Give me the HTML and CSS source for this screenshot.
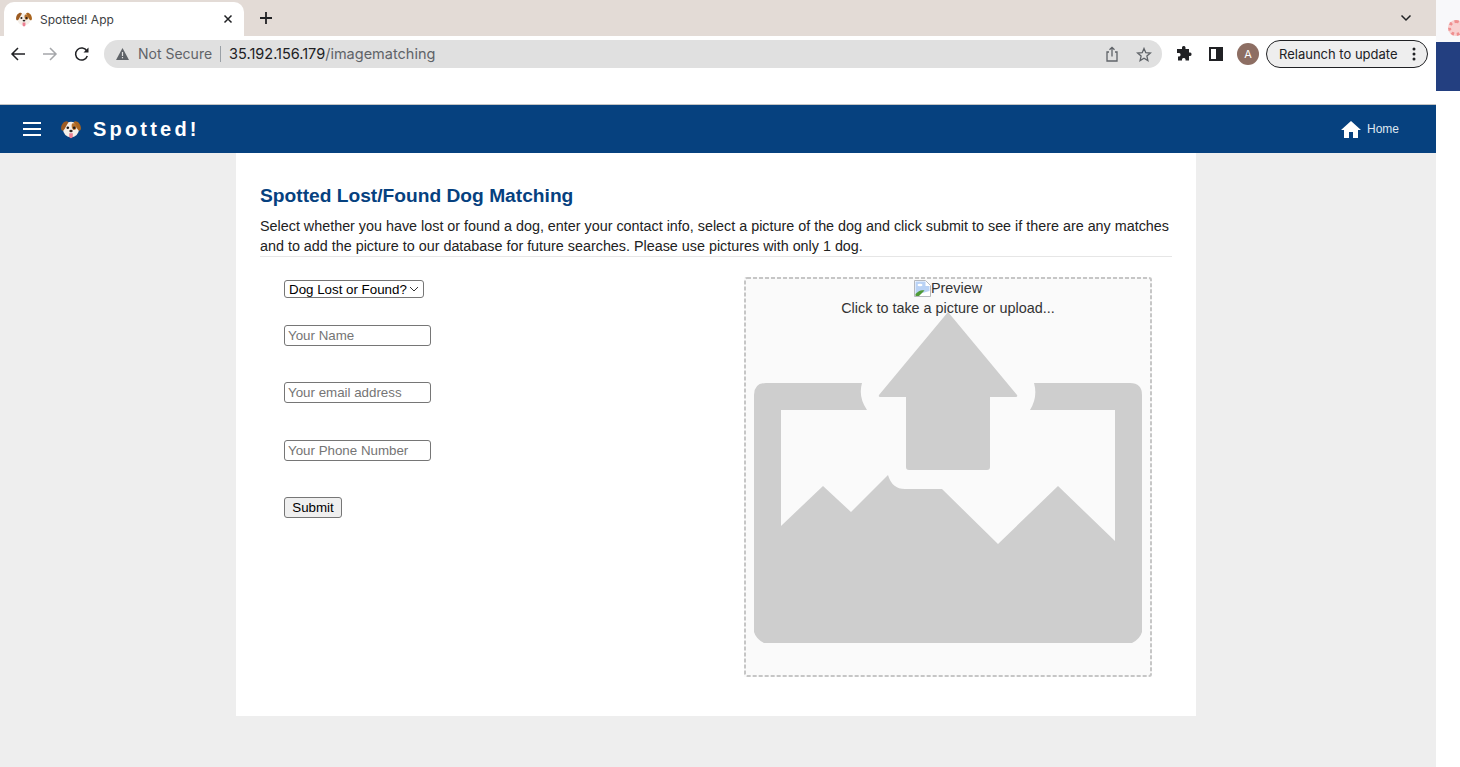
FILE: index.html
```html
<!DOCTYPE html>
<html lang="en">
<head>
  <meta charset="UTF-8">
  <meta name="viewport" content="width=device-width, initial-scale=1.0">
  <title>Spotted! App</title>
  <link rel="stylesheet" href="styles.css">
</head>
<body>
  <svg class="defs" width="0" height="0">
    <symbol id="dog" viewBox="0 0 20 20">
      <ellipse cx="10" cy="10.500" rx="8" ry="7.800" fill="#f5efe8"/>
      <path d="M6 2.200C3 2 .4 5 .1 8.800c-.2 2.400 1.200 3.600 2.500 2.500C4 10 5.200 6.500 7.500 3.200z" fill="#9c5b22"/>
      <path d="M14 2.200c3-.2 5.600 2.800 5.900 6.600.2 2.400-1.200 3.600-2.500 2.500C16 10 14.800 6.500 12.500 3.200z" fill="#a9651f"/>
      <path d="M11.300 4.600c2.200-1 4.300.8 4.300 3.300 0 2.100-1.500 3.300-3.100 3-1.700-.4-2.500-5.300-1.200-6.300z" fill="#b5722f"/>
      <circle cx="6.800" cy="8.800" r="1.300" fill="#1f1a17"/>
      <circle cx="13.200" cy="8.800" r="1.300" fill="#1f1a17"/>
      <ellipse cx="10" cy="12" rx="1.700" ry="1.200" fill="#2b2522"/>
      <path d="M8.200 14.300h3.600v3.200a1.800 1.800 0 0 1-3.600 0z" fill="#ec7f92"/>
    </symbol>
  </svg>

  <div class="screen">
    <div class="browser">
      <div class="tabbar">
        <div class="tab">
          <svg class="favicon" width="16" height="16"><use href="#dog"/></svg>
          <span class="tab-title">Spotted! App</span>
          <svg class="tab-close" width="10" height="10" viewBox="0 0 10 10"><path d="M1.500 1.500l7 7M8.500 1.500l-7 7" stroke="#202124" stroke-width="1.500"/></svg>
        </div>
        <svg class="new-tab" width="14" height="14" viewBox="0 0 14 14"><path d="M7 1v12M1 7h12" stroke="#202124" stroke-width="1.800"/></svg>
        <svg class="tab-list" width="12" height="8" viewBox="0 0 12 8"><path d="M1.500 1.500L6 6l4.500-4.500" fill="none" stroke="#202124" stroke-width="1.500"/></svg>
      </div>

      <div class="toolbar">
        <svg class="tool-btn" width="16" height="16" viewBox="0 0 16 16"><path d="M15 8H2M8 2L2 8l6 6" fill="none" stroke="#202124" stroke-width="1.500"/></svg>
        <svg class="tool-btn" width="16" height="16" viewBox="0 0 16 16"><path d="M1 8h13M8 2l6 6-6 6" fill="none" stroke="#a5a7aa" stroke-width="1.500"/></svg>
        <svg class="tool-btn" width="16" height="16" viewBox="0 0 16 16"><path d="M13.300 10a6 6 0 1 1-.5-5" fill="none" stroke="#202124" stroke-width="1.500"/><path d="M14.500 1.500v5h-5z" fill="#202124"/></svg>

        <div class="omnibox">
          <svg class="warn" width="13" height="12" viewBox="0 0 13 12"><path d="M6.500 0L13 12H0z" fill="#5f6368"/><path d="M5.900 4h1.200v4H5.900zM5.900 9h1.200v1.200H5.900z" fill="#e0e0e0"/></svg>
          <span class="not-secure">Not Secure</span>
          <span class="omni-sep"></span>
          <span class="url">35.192.156.179<span class="url-path">/imagematching</span></span>
          <svg class="share" width="14" height="16" viewBox="0 0 14 16"><path d="M4 6H2v9h10V6h-2M7 10.500V1.500M4.500 3.800L7 1.300l2.500 2.500" fill="none" stroke="#5f6368" stroke-width="1.300"/></svg>
          <svg class="star" width="16" height="15" viewBox="0 0 16 15"><path d="M8 1.500l1.800 4.200 4.600.4-3.500 3 1 4.500L8 11.200l-3.900 2.400 1-4.500-3.500-3 4.600-.4z" fill="none" stroke="#5f6368" stroke-width="1.300"/></svg>
        </div>

        <svg class="puzzle" width="16" height="16" viewBox="0 0 16 16"><path d="M6 1.500a1.800 1.800 0 0 1 3.500 0V3H13v3.500h1.200a1.800 1.800 0 0 1 0 3.500H13v4.500H9.500v-1.200a1.800 1.800 0 0 0-3.500 0v1.200H2v-4h1.200a1.800 1.800 0 0 0 0-3.500H1V3h5z" fill="#202124"/></svg>
        <span class="side-panel"></span>
        <span class="avatar">A</span>
        <div class="relaunch">
          <span>Relaunch to update</span>
          <svg width="4" height="14" viewBox="0 0 4 14"><circle cx="2" cy="2" r="1.500"/><circle cx="2" cy="7" r="1.500"/><circle cx="2" cy="12" r="1.500"/></svg>
        </div>
      </div>

      <div class="infobar-gap"></div>

      <header class="navbar">
        <div class="hamburger"><span></span><span></span><span></span></div>
        <svg class="nav-dog" width="20" height="20"><use href="#dog"/></svg>
        <span class="brand">Spotted!</span>
        <a class="home-link" href="#">
          <svg width="20" height="17" viewBox="0 0 20 17"><path d="M10 0L0 9h3v8h5v-6h4v6h5V9h3z" fill="#fff"/></svg>
          <span>Home</span>
        </a>
      </header>

      <main class="page">
        <section class="card">
          <h1>Spotted Lost/Found Dog Matching</h1>
          <p class="intro">Select whether you have lost or found a dog, enter your contact info, select a picture of the dog and click submit to see if there are any matches and to add the picture to our database for future searches. Please use pictures with only 1 dog.</p>

          <div class="match-row">
            <form class="match-form">
              <select class="lost-found">
                <option>Dog Lost or Found?</option>
                <option>Lost</option>
                <option>Found</option>
              </select>
              <input type="text" placeholder="Your Name">
              <input type="text" placeholder="Your email address">
              <input type="text" placeholder="Your Phone Number">
              <button type="button">Submit</button>
            </form>

            <div class="dropzone">
              <svg class="upload-art" width="408" height="400" viewBox="744 277 408 400">
                <rect x="745" y="278" width="406" height="398" rx="2" fill="none" stroke="#c6c6c6" stroke-width="2" stroke-dasharray="4 2"/>
                <path d="M862 383H766Q754 383 754 395V632Q756 639 764 643H1132Q1140 639 1142 632V395Q1142 383 1130 383H1034Q1038 397 1030 410H1115V541L1058 486 998 544 942 489H905Q892 489 888 475L851 512 823 486 781 526V410H867Q858 397 862 383Z" fill="#cecece"/>
                <path d="M948 312L1017 395Q1018 397 1015 397H990V467Q990 470 987 470H909Q906 470 906 467V397H881Q878 397 879 395Z" fill="#cecece"/>
              </svg>
              <div class="preview">
                <svg width="17" height="17" viewBox="0 0 17 17"><path d="M.5.500h11l5 5v11H.5z" fill="#fff" stroke="#b5b8bd"/><path d="M1.500 1.500h10v4.500h4v5L1.500 15z" fill="#b9d2f5"/><path d="M1.500 16v-2c3-3.500 6-4.500 9-3.500L5 16z" fill="#4f9a36"/><ellipse cx="6" cy="5" rx="2.500" ry="1.300" fill="#fff"/></svg>
                <span>Preview</span>
              </div>
              <div class="hint">Click to take a picture or upload...</div>
            </div>
          </div>
        </section>
      </main>
    </div>

    <aside class="side-strip">
      <div class="strip-top"><span class="strip-logo"></span></div>
      <div class="strip-blue"></div>
    </aside>
  </div>
</body>
</html>
```

FILE: styles.css
```css
* {
  box-sizing: border-box;
}
html, body {
  margin: 0;
  height: 767px;
  overflow: hidden;
}
body {
  font-family: "Liberation Sans", Arial, sans-serif;
  background-color: #fff;
}
.defs {
  position: absolute;
}
.screen {
  display: flex;
  height: 767px;
}
.browser {
  width: 1436px;
  display: flex;
  flex-direction: column;
}

/* browser chrome */
.tabbar {
  height: 36px;
  background-color: #e3dbd6;
  display: flex;
  align-items: center;
  padding-left: 4px;
}
.tab {
  width: 240px;
  height: 34px;
  margin-top: 2px;
  background-color: #fff;
  border-radius: 10px 10px 0 0;
  display: flex;
  align-items: center;
  padding: 0 11px 0 12px;
  font-family: Inter, sans-serif;
  font-size: 12px;
  color: #3c4043;
}
.tab-title {
  margin-left: 8px;
  flex: 1;
}
.new-tab {
  margin-left: 15px;
}
.tab-list {
  margin-left: 1127px;
}
.toolbar {
  height: 36px;
  display: flex;
  align-items: center;
  padding-left: 10px;
}
.tool-btn {
  margin-right: 16px;
}
.omnibox {
  width: 1058px;
  height: 28px;
  margin-left: -2px;
  background-color: #e0e0e0;
  border-radius: 14px;
  display: flex;
  align-items: center;
  padding-left: 12px;
  font-family: Inter, sans-serif;
  font-size: 14px;
}
.not-secure {
  margin-left: 9px;
  padding-bottom: 2px;
  color: #5f6368;
}
.omni-sep {
  width: 1px;
  height: 16px;
  background-color: #9aa0a6;
  margin: 0 8px;
}
.url {
  color: #202124;
  flex: 1;
  padding-bottom: 2px;
  font-size: 14.500px;
}
.url-path {
  color: #5f6368;
}
.star {
  margin: 0 10px 0 17px;
}
.puzzle {
  margin-left: 14px;
}
.side-panel {
  width: 14px;
  height: 14px;
  margin-left: 17px;
  border: 2px solid #202124;
  border-right-width: 7px;
}
.avatar {
  width: 22px;
  height: 22px;
  margin-left: 14px;
  border-radius: 50%;
  background-color: #8d6e63;
  color: #fff;
  font-family: Inter, sans-serif;
  font-size: 11px;
  display: flex;
  align-items: center;
  justify-content: center;
}
.relaunch {
  width: 162px;
  height: 28px;
  margin-left: 7px;
  border: 1px solid #202124;
  border-radius: 14px;
  background-color: #eeeeee;
  display: flex;
  align-items: center;
  justify-content: space-between;
  padding: 0 11px 0 12px;
  font-family: Inter, sans-serif;
  font-size: 13px;
  color: #202124;
}
.relaunch svg {
  fill: #202124;
}
.infobar-gap {
  height: 33px;
  border-bottom: 1px solid #c4c4c4;
}

/* site navbar */
.navbar {
  height: 48px;
  background-color: #06417f;
  display: flex;
  align-items: center;
  color: #fff;
  padding-left: 23px;
}
.hamburger {
  width: 18px;
}
.hamburger span {
  display: block;
  height: 2px;
  margin-bottom: 4px;
  background-color: #fff;
}
.hamburger span:last-child {
  margin-bottom: 0;
}
.nav-dog {
  margin-left: 20px;
}
.brand {
  margin-left: 12px;
  font-size: 20px;
  font-weight: bold;
  letter-spacing: 3.200px;
}
.home-link {
  margin-left: auto;
  margin-right: 37px;
  display: flex;
  align-items: center;
  gap: 6px;
  color: #dfe7f1;
  text-decoration: none;
  font-size: 12px;
}

/* page */
.page {
  flex: 1;
  background-color: #eeeeee;
}
.card {
  width: 960px;
  height: 563px;
  margin-left: 236px;
  background-color: #fff;
  padding: 31px 24px 0;
}
h1 {
  margin: 0 0 9px;
  font-size: 19.200px;
  line-height: 23px;
  color: #06417f;
}
.intro {
  margin: 0;
  font-size: 14.350px;
  line-height: 20px;
  color: #222;
  border-bottom: 1px solid #e6e6e6;
}
.match-row {
  display: flex;
  margin-top: 20px;
}
.match-form {
  width: 484px;
  padding: 3px 0 0 24px;
  display: flex;
  flex-direction: column;
  align-items: flex-start;
}
.match-form select,
.match-form input,
.match-form button {
  font-family: "Liberation Sans", Arial, sans-serif;
  font-size: 13.333px;
  border: 1px solid #767676;
  border-radius: 3px;
}
.lost-found {
  appearance: none;
  width: 140px;
  height: 18px;
  margin-bottom: 27px;
  padding: 0 0 0 4px;
  color: #000;
  background: #fff url("data:image/svg+xml,%3Csvg xmlns='http://www.w3.org/2000/svg' width='10' height='6'%3E%3Cpath d='M1 1l4 4 4-4' fill='none' stroke='%23333' stroke-width='1'/%3E%3C/svg%3E") no-repeat right 4px center;
}
.match-form input {
  width: 147px;
  height: 21px;
  margin-bottom: 36.400px;
  padding: 1px 3px;
}
.match-form button {
  width: 58px;
  height: 21px;
  background-color: #efefef;
  padding: 0;
  color: #000;
}
.dropzone {
  position: relative;
  width: 408px;
  height: 400px;
  border: 2px solid transparent;
  background-color: #fafafa;
  text-align: center;
  color: #333;
  font-size: 14.400px;
}
.upload-art {
  position: absolute;
  left: -2px;
  top: -2px;
}
.preview,
.hint {
  position: relative;
}
.preview {
  display: flex;
  justify-content: center;
  align-items: center;
  height: 20px;
  margin-top: -1px;
}
.hint {
  line-height: 20px;
}

/* neighbouring window edge */
.side-strip {
  width: 24px;
  background-color: #fff;
  overflow: hidden;
}
.strip-top {
  height: 42px;
  background-color: #f8f8fa;
  padding: 20px 0 0 12px;
}
.strip-logo {
  display: block;
  width: 16px;
  height: 16px;
  border-radius: 50%;
  border: 3px dotted #ef8f8f;
  background-color: #f8d0d0;
}
.strip-blue {
  height: 49px;
  background-color: #233f80;
}
```
